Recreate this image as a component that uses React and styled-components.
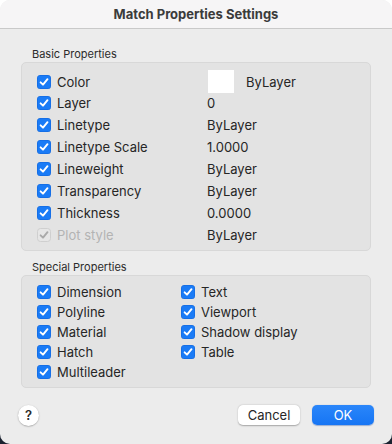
import React from 'react'
import styled, { createGlobalStyle } from 'styled-components'

const GlobalStyle = createGlobalStyle`
  html, body {
    margin: 0;
    padding: 0;
  }
  body {
    background: linear-gradient(to bottom, #ffffff 50%, #1b2230 50%);
    font-family: Inter, "Noto Sans", "Liberation Sans", sans-serif;
    -webkit-font-smoothing: antialiased;
  }
`

const basicProps = [
  { name: 'Color', value: 'ByLayer', swatch: true },
  { name: 'Layer', value: '0' },
  { name: 'Linetype', value: 'ByLayer' },
  { name: 'Linetype Scale', value: '1.0000' },
  { name: 'Lineweight', value: 'ByLayer' },
  { name: 'Transparency', value: 'ByLayer' },
  { name: 'Thickness', value: '0.0000' },
  { name: 'Plot style', value: 'ByLayer', disabled: true },
]

// listed column by column
const specialLeft = ['Dimension', 'Polyline', 'Material', 'Hatch', 'Multileader']
const specialRight = ['Text', 'Viewport', 'Shadow display', 'Table']

const Check = ({ disabled }) => (
  <CheckBox $disabled={disabled}>
    <svg width="10" height="10" viewBox="0 0 10 10">
      <path d="M1.6 5.3 L4 7.7 L8.5 2.2" fill="none" stroke={disabled ? '#a9a9a9' : '#fff'}
        strokeWidth="1.9" strokeLinecap="round" strokeLinejoin="round" />
    </svg>
  </CheckBox>
)

const App = () => {
  return (
    <>
      <GlobalStyle />
      <Window>
        <TitleBar>Match Properties Settings</TitleBar>

        <Content>
          <SectionLabel>Basic Properties</SectionLabel>
          <GroupBox $pad="7px 0 4px">
            {basicProps.map(p => (
              <BasicRow key={p.name}>
                <CheckItem $disabled={p.disabled}>
                  <Check disabled={p.disabled} />
                  {p.name}
                </CheckItem>
                <Value>
                  {p.swatch && <Swatch />}
                  {p.value}
                </Value>
              </BasicRow>
            ))}
          </GroupBox>

          <SectionLabel $top="9px">Special Properties</SectionLabel>
          <GroupBox $pad="6px 0 5px">
            <SpecialGrid>
              <div>
                {specialLeft.map(n => (
                  <SpecialRow key={n}><Check />{n}</SpecialRow>
                ))}
              </div>
              <div>
                {specialRight.map(n => (
                  <SpecialRow key={n}><Check />{n}</SpecialRow>
                ))}
              </div>
            </SpecialGrid>
          </GroupBox>
        </Content>

        <Footer>
          <HelpButton>?</HelpButton>
          <Buttons>
            <Button>Cancel</Button>
            <Button $primary>OK</Button>
          </Buttons>
        </Footer>
      </Window>
    </>
  )
}

const Window = styled.div`
  width: 392px;
  height: 444px;
  box-sizing: border-box;
  background: #ececec;
  border-radius: 10px;
  overflow: hidden;
  display: flex;
  flex-direction: column;
  color: #262626;
`

const TitleBar = styled.div`
  height: 28px;
  line-height: 28px;
  background: #f6f5f6;
  border-bottom: 1px solid #c9c9c9;
  text-align: center;
  font-size: 13px;
  font-weight: 700;
  color: #3b3b3b;
`

const Content = styled.div`
  padding: 0 21px;
`

const SectionLabel = styled.div`
  margin: ${p => p.$top || '18px'} 0 1px 11px;
  font-size: 11px;
  line-height: 14px;
  color: #2b2b2b;
`

const GroupBox = styled.div`
  background: #e3e3e3;
  border: 1px solid #d8d8d8;
  border-radius: 5px;
  padding: ${p => p.$pad};
`

const BasicRow = styled.div`
  display: grid;
  grid-template-columns: 170px 1fr;
  align-items: center;
  height: 22px;
  padding-left: 15px;
`

const CheckItem = styled.div`
  display: flex;
  align-items: center;
  gap: 6px;
  font-size: 13px;
  color: ${p => (p.$disabled ? '#b3b3b3' : '#262626')};
`

const CheckBox = styled.span`
  width: 14px;
  height: 14px;
  flex: none;
  box-sizing: border-box;
  border-radius: 3.5px;
  display: flex;
  align-items: center;
  justify-content: center;
  background: ${p => (p.$disabled ? '#e6e6e6' : '#1a7bf6')};
  border: ${p => (p.$disabled ? '1px solid #cfcfcf' : 'none')};
  box-shadow: ${p => (p.$disabled ? 'none' : 'inset 0 0 0 0.5px rgba(0,60,160,0.35)')};
`

const Value = styled.div`
  display: flex;
  align-items: center;
  gap: 12px;
  font-size: 13px;
`

const Swatch = styled.span`
  width: 26px;
  height: 23px;
  background: #ffffff;
  margin-left: 1px;
`

const SpecialGrid = styled.div`
  display: grid;
  grid-template-columns: 144px 1fr;
  padding-left: 15px;
`

const SpecialRow = styled.div`
  display: flex;
  align-items: center;
  gap: 6px;
  height: 20px;
  font-size: 13px;
`

const Footer = styled.div`
  display: flex;
  align-items: center;
  justify-content: space-between;
  height: 22px;
  margin-top: 16px;
  padding: 0 18px;
`

const HelpButton = styled.div`
  width: 21px;
  height: 21px;
  border-radius: 50%;
  background: #ffffff;
  box-shadow: 0 0.5px 1.5px rgba(0,0,0,0.35);
  display: flex;
  align-items: center;
  justify-content: center;
  font-size: 13px;
  font-weight: 600;
  color: #2a2a2a;
`

const Buttons = styled.div`
  display: flex;
  gap: 12px;
`

const Button = styled.div`
  width: 62px;
  height: 20px;
  line-height: 20px;
  border-radius: 5px;
  text-align: center;
  font-size: 13px;
  background: ${p => (p.$primary ? 'linear-gradient(#2a86fa, #1675f4)' : '#ffffff')};
  color: ${p => (p.$primary ? '#ffffff' : '#262626')};
  box-shadow: ${p => (p.$primary ? '0 0.5px 1px rgba(0,60,160,0.35)' : '0 0.5px 1.5px rgba(0,0,0,0.3)')};
`

export default App
